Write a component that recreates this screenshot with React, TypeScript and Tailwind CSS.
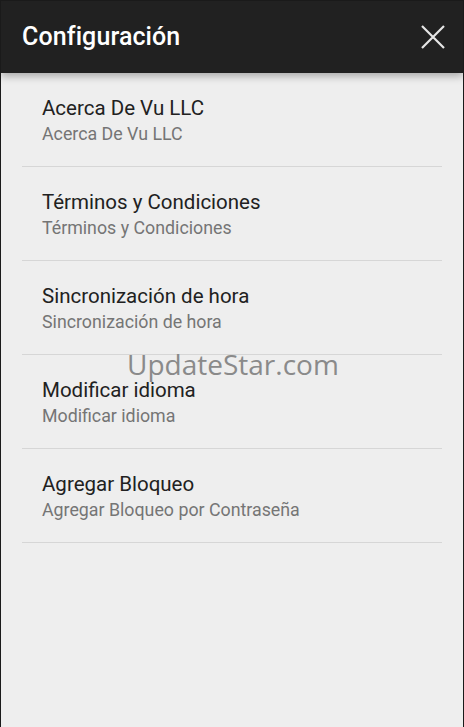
const items = [
  { title: "Acerca De Vu LLC", sub: "Acerca De Vu LLC" },
  { title: "Términos y Condiciones", sub: "Términos y Condiciones" },
  { title: "Sincronización de hora", sub: "Sincronización de hora" },
  { title: "Modificar idioma", sub: "Modificar idioma" },
  { title: "Agregar Bloqueo", sub: "Agregar Bloqueo por Contraseña" },
];

export default function App() {
  return (
    <div className="relative flex h-[727px] w-[464px] flex-col overflow-hidden border-x border-t border-[#1a1a1a] bg-[#eeeeee] font-['Roboto',sans-serif]">
      <header className="relative z-10 flex h-[72px] shrink-0 items-center justify-between bg-[#212121] pl-[21px] pr-[18px] shadow-[0_3px_8px_rgba(0,0,0,0.3)]">
        <h1 className="text-[25px] font-medium tracking-[0.1px] text-white">Configuración</h1>
        <svg width="24" height="24" viewBox="0 0 24 24" className="text-[#e6e6e6]">
          <path d="M1 1 L23 23 M23 1 L1 23" stroke="currentColor" strokeWidth="2.2" fill="none" />
        </svg>
      </header>
      <ul className="px-[21px]">
        {items.map((it) => (
          <li key={it.title} className="border-b border-[#d6d6d6] pb-[20px] pl-[20px] pt-[23px]">
            <div className="text-[20.5px] leading-6 text-[#212121]">{it.title}</div>
            <div className="mt-[2px] text-[17.8px] leading-6 text-[#757575]">{it.sub}</div>
          </li>
        ))}
      </ul>
      <div className="pointer-events-none absolute left-[126px] top-[343px] font-['Open_Sans',sans-serif] text-[28px] leading-10 text-[#8a8a8a]">
        UpdateStar.com
      </div>
    </div>
  );
}
